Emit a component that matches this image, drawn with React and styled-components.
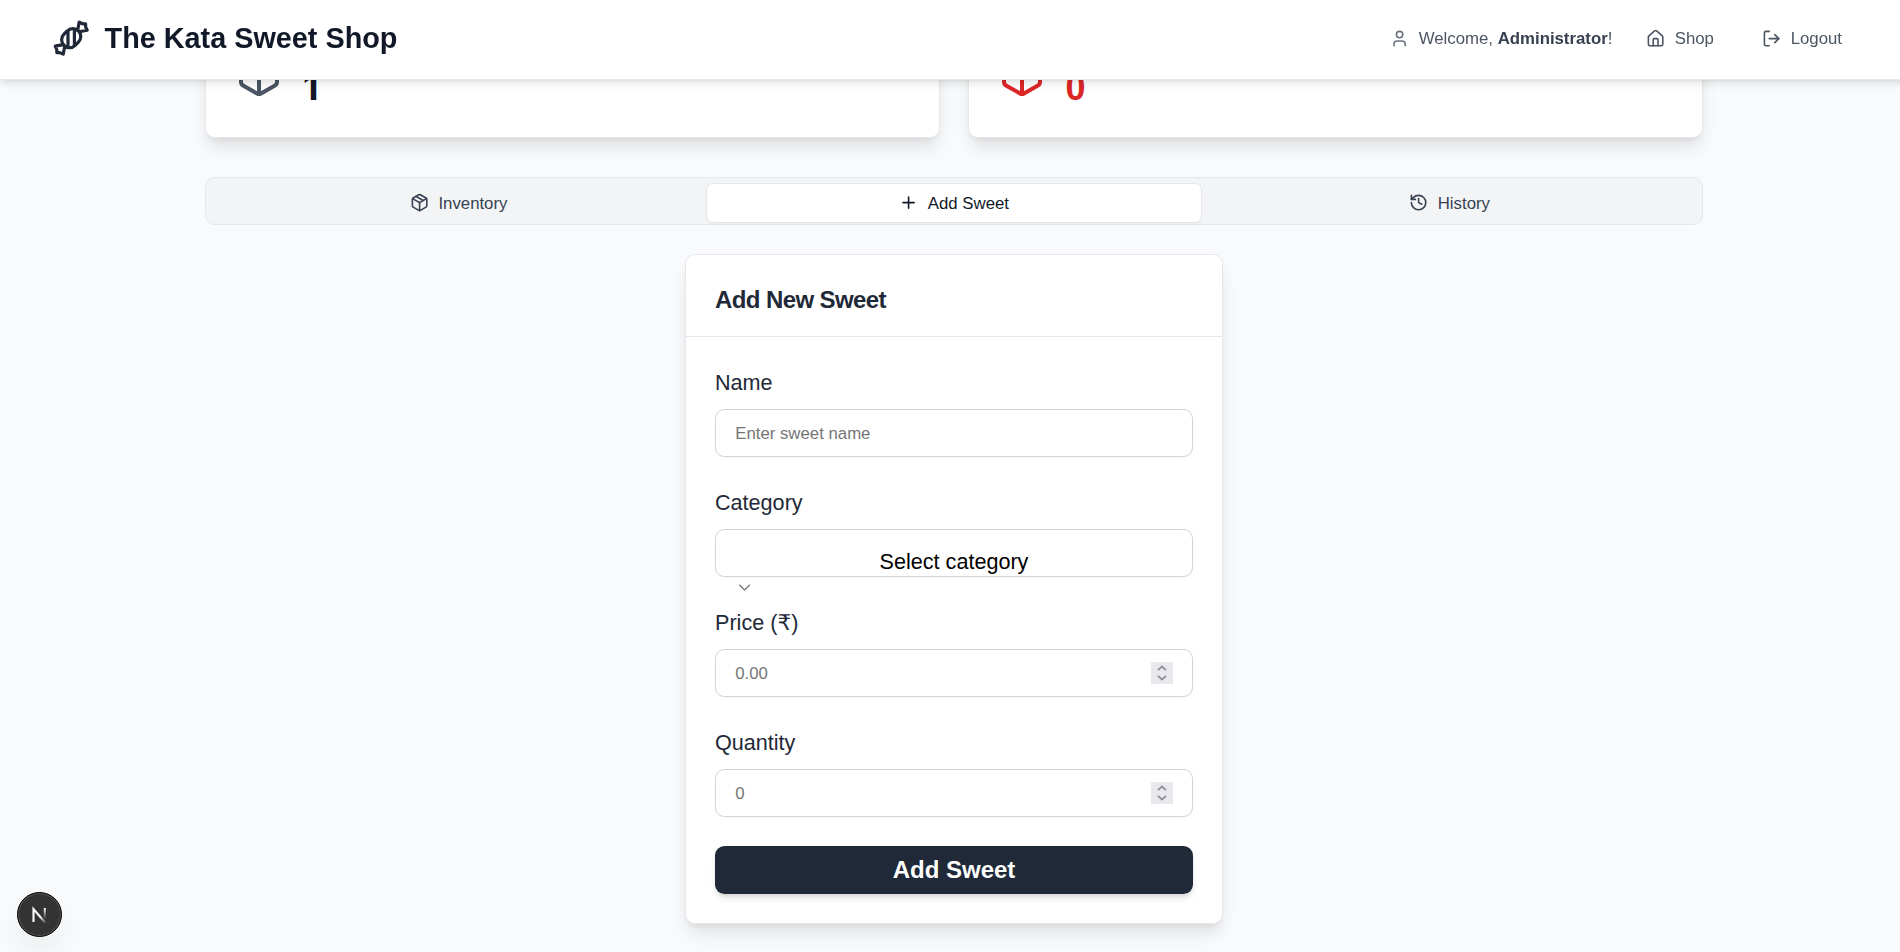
import React from "react";
import styled, { createGlobalStyle } from "styled-components";
import {
  User,
  House,
  LogOut,
  Package,
  Plus,
  History,
  ChevronDown,
} from "lucide-react";

const GlobalStyle = createGlobalStyle`
  *, *::before, *::after { box-sizing: border-box; }
  html, body { margin: 0; height: 952px; overflow: hidden; }
  body {
    background: #f9fafb;
    font-family: "Liberation Sans", Arial, sans-serif;
    font-size: 16.8px;
    line-height: 24px;
    color: #1f2937;
  }
  button, input { font-family: inherit; }
`;

const Page = styled.div`
  width: 1908px;
  height: 952px;
  overflow: hidden;
`;

const Header = styled.header`
  position: fixed;
  top: 0;
  left: 0;
  z-index: 10;
  display: flex;
  align-items: center;
  justify-content: space-between;
  width: 1908px;
  height: 80px;
  padding: 0 51.6px 2px 52.4px;
  background: #fff;
  border-bottom: 1px solid #e5e7eb;
  box-shadow: 0 4.8px 7.2px -1.2px rgba(0, 0, 0, 0.1), 0 2.4px 4.8px -2.4px rgba(0, 0, 0, 0.1);
`;

const Brand = styled.div`
  display: flex;
  align-items: center;
  gap: 13.8px;
`;

const BrandName = styled.h1`
  margin: 0;
  font-size: 28.8px;
  line-height: 38.4px;
  font-weight: 700;
  color: #111827;
`;

const Nav = styled.nav`
  display: flex;
  align-items: center;
  gap: 19.2px;
  color: #4b5563;
`;

const Welcome = styled.div`
  display: flex;
  align-items: center;
  gap: 9.6px;
  white-space: nowrap;

  svg { color: #6b7280; }
  strong { color: #374151; }
`;

const NavButton = styled.button`
  display: flex;
  align-items: center;
  gap: 9.6px;
  height: 43px;
  padding: 0 14.4px;
  border: 0;
  background: transparent;
  font-size: 16.8px;
  color: inherit;
`;

const Main = styled.main`
  display: flex;
  flex-direction: column;
  width: 1498px;
  margin: 0 auto;
  padding-top: 10.8px;
`;

const Stats = styled.section`
  display: grid;
  grid-template-columns: 1fr 1fr;
  gap: 28.8px;
`;

const StatCard = styled.div`
  display: flex;
  align-items: center;
  gap: 19.2px;
  height: 126.8px;
  padding: 28.8px;
  border: 1px solid #e5e7eb;
  border-radius: 9.6px;
  background: #fff;
  color: ${(p) => (p.$alert ? "#dc2626" : "#4b5563")};
  box-shadow: 0 12px 18px -3.6px rgba(0, 0, 0, 0.1), 0 4.8px 7.2px -4.8px rgba(0, 0, 0, 0.1);
`;

const StatValue = styled.div`
  padding-top: ${(p) => (p.$alert ? "27.6px" : "27.6px")};
  padding-left: ${(p) => (p.$alert ? "0" : "1px")};
  font-family: ${(p) => (p.$alert ? "inherit" : 'Inter, "Liberation Sans", sans-serif')};
  font-size: 36px;
  line-height: 43.2px;
  font-weight: 700;
  color: ${(p) => (p.$alert ? "#dc2626" : "#111827")};
`;

const Tabs = styled.div`
  display: grid;
  grid-template-columns: repeat(3, 1fr);
  height: 48px;
  margin-top: 39.4px;
  padding: 5px 4.8px;
  border: 1px solid #e5e7eb;
  border-radius: 9.6px;
  background: #f3f4f6;
`;

const Tab = styled.button`
  display: flex;
  align-items: center;
  justify-content: center;
  gap: 9.6px;
  height: 40px;
  padding: 0;
  border: 1px solid ${(p) => (p.$active ? "#e5e7eb" : "transparent")};
  border-radius: 7.2px;
  background: ${(p) => (p.$active ? "#fff" : "transparent")};
  box-shadow: ${(p) => (p.$active ? "0 1px 2px rgba(0, 0, 0, 0.03)" : "none")};
  font-size: 16.8px;
  color: ${(p) => (p.$active ? "#111827" : "#374151")};

  span { padding-top: 2px; }
`;

const FormCard = styled.section`
  align-self: center;
  width: 537.6px;
  margin-top: 29px;
  border: 1px solid #e5e7eb;
  border-radius: 9.6px;
  background: #fff;
  box-shadow: 0 12px 18px -3.6px rgba(0, 0, 0, 0.1), 0 4.8px 7.2px -4.8px rgba(0, 0, 0, 0.1);
`;

const FormHeader = styled.div`
  display: flex;
  align-items: center;
  height: 82px;
  padding: 10px 28.8px 0;
  border-bottom: 1px solid #e5e7eb;
`;

const FormTitle = styled.h2`
  margin: 0;
  font-size: 24px;
  line-height: 24px;
  font-weight: 700;
  letter-spacing: -0.6px;
`;

const Form = styled.div`
  display: flex;
  flex-direction: column;
  gap: 28.8px;
  padding: 28.8px;
`;

const Field = styled.label`
  display: flex;
  flex-direction: column;
  height: 91.2px;
  font-size: 21.6px;
  line-height: 33.6px;
`;

const LabelText = styled.span`
  height: 33.6px;
`;

const Currency = styled.span`
  font-family: "DejaVu Sans", sans-serif;
  line-height: 1;
`;

const Control = styled.div`
  display: flex;
  align-items: center;
  flex: none;
  height: 48px;
  margin-top: 9.6px;
  padding: 0 19.2px;
  border: 1px solid #d1d5db;
  border-radius: 9.6px;
  background: #fff;
  box-shadow: 0 1px 2px rgba(0, 0, 0, 0.03);
`;

const TextInput = styled.input`
  flex: 1;
  min-width: 0;
  padding: 2px 0 0;
  border: 0;
  outline: 0;
  background: transparent;
  font-size: 16.8px;
  color: #111827;

  &::placeholder { color: #757575; }
`;

const Spinner = styled.span`
  display: flex;
  flex-direction: column;
  align-items: center;
  justify-content: center;
  width: 22px;
  height: 22px;
  background: #e9e9ed;
  color: #8f8f9d;
`;

const SelectBox = styled(Control)`
  flex-direction: column;
  align-items: stretch;
  padding: 15px 19.2px 0;
  color: #000;
  text-align: center;

  svg { flex: none; margin-top: -1px; color: #808080; }
`;

const Submit = styled.button`
  height: 48px;
  border: 0;
  border-radius: 9.6px;
  background: #1f2937;
  color: #fff;
  font-size: 24px;
  font-weight: 700;
  box-shadow: 0 4.8px 7.2px -1.2px rgba(0, 0, 0, 0.1), 0 2.4px 4.8px -2.4px rgba(0, 0, 0, 0.1);
`;

const DevBadge = styled.div`
  position: fixed;
  left: 17px;
  bottom: 15px;
  display: flex;
  align-items: center;
  justify-content: center;
  width: 45px;
  height: 45px;
  border-radius: 50%;
  background: #333;
  border: 1px solid #000;
  box-shadow: inset 0 0 0 1px #555, 0 16px 32px -8px rgba(0, 0, 0, 0.12);
`;

function CandyIcon() {
  return (
    <svg
      width="38.4"
      height="38.4"
      viewBox="0 0 24 24"
      fill="none"
      stroke="#1f2937"
      strokeWidth="2"
      strokeLinecap="round"
      strokeLinejoin="round"
    >
      <path d="m9.5 7.5-2 2a4.95 4.95 0 1 0 7 7l2-2a4.95 4.95 0 1 0-7-7Z" />
      <path d="M14 6.5v10" />
      <path d="M10 7.5v10" />
      <path d="m16 7 1-5 1.37.68A3 3 0 0 0 19.7 3H21v1.3c0 .46.1.92.32 1.33L22 7l-5 1" />
      <path d="m8 17-1 5-1.37-.68A3 3 0 0 0 4.3 21H3v-1.3a3 3 0 0 0-.32-1.33L2 17l5-1" />
    </svg>
  );
}

function NextMark() {
  return (
    <svg width="20" height="20" viewBox="0 0 20 20" fill="none">
      <defs>
        <linearGradient id="diag" x1="11" y1="11" x2="16.5" y2="18" gradientUnits="userSpaceOnUse">
          <stop stopColor="#fff" />
          <stop offset="1" stopColor="#fff" stopOpacity="0" />
        </linearGradient>
        <linearGradient id="stem" x1="15" y1="3" x2="15" y2="14" gradientUnits="userSpaceOnUse">
          <stop stopColor="#fff" />
          <stop offset="1" stopColor="#fff" stopOpacity="0" />
        </linearGradient>
      </defs>
      <path d="M3.5 17V4L15.5 18" stroke="url(#diag)" strokeWidth="2.1" />
      <path d="M14.8 3v12" stroke="url(#stem)" strokeWidth="2" />
    </svg>
  );
}

function TextField({ label, placeholder, numeric }) {
  return (
    <Field>
      <LabelText>{label}</LabelText>
      <Control>
        <TextInput placeholder={placeholder} />
        {numeric && (
          <Spinner>
            <svg width="10" height="16" viewBox="0 0 10 16" fill="none" stroke="currentColor" strokeWidth="1.8">
              <path d="M1 5.2l4-3.7 4 3.7M1 10.8l4 3.7 4-3.7" />
            </svg>
          </Spinner>
        )}
      </Control>
    </Field>
  );
}

export default function App() {
  return (
    <Page>
      <GlobalStyle />
      <Header>
        <Brand>
          <CandyIcon />
          <BrandName>The Kata Sweet Shop</BrandName>
        </Brand>
        <Nav>
          <Welcome>
            <User size={19.2} />
            <span>
              Welcome, <strong>Administrator</strong>!
            </span>
          </Welcome>
          <NavButton>
            <House size={19.2} />
            Shop
          </NavButton>
          <NavButton>
            <LogOut size={19.2} />
            Logout
          </NavButton>
        </Nav>
      </Header>
      <Main>
        <Stats>
          <StatCard>
            <Package size={48} />
            <StatValue>1</StatValue>
          </StatCard>
          <StatCard $alert>
            <Package size={48} />
            <StatValue $alert>0</StatValue>
          </StatCard>
        </Stats>
        <Tabs>
          <Tab>
            <Package size={19.2} />
            <span>Inventory</span>
          </Tab>
          <Tab $active>
            <Plus size={19.2} />
            <span>Add Sweet</span>
          </Tab>
          <Tab>
            <History size={19.2} />
            <span>History</span>
          </Tab>
        </Tabs>
        <FormCard>
          <FormHeader>
            <FormTitle>Add New Sweet</FormTitle>
          </FormHeader>
          <Form>
            <TextField label="Name" placeholder="Enter sweet name" />
            <Field as="div">
              <LabelText>Category</LabelText>
              <SelectBox>
                Select category
                <ChevronDown size={19.2} />
              </SelectBox>
            </Field>
            <TextField
              label={
                <>
                  Price (<Currency>₹</Currency>)
                </>
              }
              placeholder="0.00"
              numeric
            />
            <TextField label="Quantity" placeholder="0" numeric />
            <Submit>Add Sweet</Submit>
          </Form>
        </FormCard>
      </Main>
      <DevBadge>
        <NextMark />
      </DevBadge>
    </Page>
  );
}
